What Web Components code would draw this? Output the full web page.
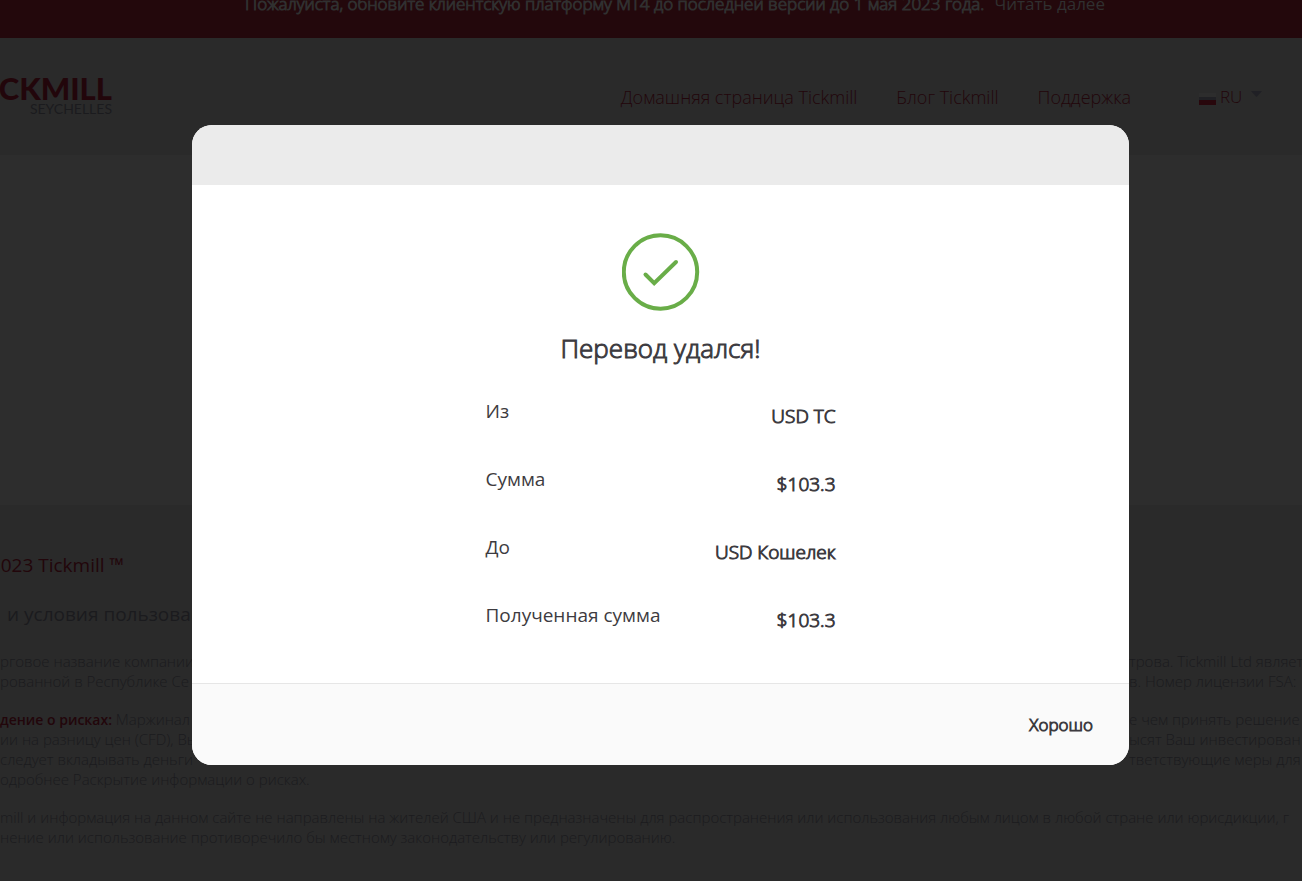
<!DOCTYPE html>
<html lang="ru">
<head>
<meta charset="utf-8">
<meta name="viewport" content="width=device-width, initial-scale=1">
<title>Tickmill</title>
<style>
html, body {
  height: 100%;
  margin: 0;
}
body {
  --columns: 192px minmax(0, 1fr) 173px;
  --accent: #22060b;
  --muted: #1b1b1e;
  display: flex;
  flex-direction: column;
  overflow: hidden;
  background: #2d2d2d;
  color: #3d3b40;
  font-family: "Open Sans", "Noto Sans", sans-serif;
}
</style>
</head>
<body>
<site-banner>
  <strong>Пожалуйста, обновите клиентскую платформу МТ4 до последней версии до 1 мая 2023 года.</strong>
  <a slot="link" href="#more">Читать далее</a>
</site-banner>
<site-header>
  <a href="#home">Домашняя страница Tickmill</a>
  <a href="#blog">Блог Tickmill</a>
  <a href="#support">Поддержка</a>
</site-header>
<site-footer></site-footer>
<result-dialog heading="Перевод удался!">
  <transfer-row label="Из">USD ТС</transfer-row>
  <transfer-row label="Сумма">$103.3</transfer-row>
  <transfer-row label="До">USD Кошелек</transfer-row>
  <transfer-row label="Полученная сумма">$103.3</transfer-row>
  <span slot="action">Хорошо</span>
</result-dialog>

<script>
class SiteBanner extends HTMLElement {
  constructor() {
    super();
    this.attachShadow({ mode: 'open' }).innerHTML = `
<style>
:host {
  display: flex;
  justify-content: center;
  align-items: flex-end;
  gap: 10px;
  box-sizing: border-box;
  height: 38px;
  flex: none;
  padding: 0 0 22px 48px;
  background: #23080c;
  color: #303030;
  font-size: 17px;
  line-height: 24px;
  white-space: nowrap;
}
::slotted(strong) { font-weight: 300; -webkit-text-stroke: 1px; }
::slotted(a) { color: inherit; text-decoration: none; }
</style>
<slot></slot><slot name="link"></slot>`;
  }
}
customElements.define('site-banner', SiteBanner);

class SiteHeader extends HTMLElement {
  constructor() {
    super();
    this.attachShadow({ mode: 'open' }).innerHTML = `
<style>
:host {
  display: flex;
  align-items: center;
  box-sizing: border-box;
  height: 117px;
  flex: none;
  padding-right: 40px;
  background: #2a2a2a;
  color: var(--accent);
  font-size: 18px;
  font-weight: 300;
  line-height: 24px;
}
/* the wordmark runs out of the left edge of the window */
.logo {
  display: flex;
  flex-direction: column;
  align-items: flex-end;
  width: 112px;
  color: inherit;
  font-family: Lato, sans-serif;
  text-decoration: none;
}
.logo b { font-size: 31px; font-weight: 900; line-height: 24px; }
.logo span { color: var(--muted); font-size: 14px; font-weight: 400; line-height: 18px; }
nav {
  display: flex;
  gap: 39px;
  margin-left: auto;
}
::slotted(a) { color: inherit; text-decoration: none; }
.lang {
  display: flex;
  align-items: center;
  gap: 4px;
  margin-left: 68px;
}
.flag { margin-top: 4px; }
.caret { margin-bottom: 6px; margin-left: 4px; }
select {
  appearance: none;
  border: 0;
  padding: 0;
  background: none;
  color: var(--accent);
  font: inherit;
  font-size: 17px;
}
</style>
<a class="logo" href="#top"><b>TICKMILL</b><span>SEYCHELLES</span></a>
<nav><slot></slot></nav>
<label class="lang">
  <svg class="flag" width="17" height="12" viewBox="0 0 17 12" aria-hidden="true">
    <path fill="#2d2d2d" d="M0 0h17v4H0z"/><path fill="#202024" d="M0 4h17v4H0z"/><path fill="#28070c" d="M0 7h17v5H0z"/>
  </svg>
  <select aria-label="Язык"><option>RU</option></select>
  <svg class="caret" width="11" height="6" viewBox="0 0 11 6" aria-hidden="true"><path fill="#202025" d="M0 0h11L5.500 6z"/></svg>
</label>`;
  }
}
customElements.define('site-header', SiteHeader);

// [left of the dialog, right of the dialog]
const notes = [
  [
    ['рговое название компании', 'трова. Tickmill Ltd являет'],
    ['рованной в Республике Се', 'в. Номер лицензии FSA:'],
  ],
  [
    ['<b>дение о рисках:</b> Маржинал', 'е чем принять решение'],
    ['ии на разницу цен (CFD), Вы', 'ысят Ваш инвестирован'],
    ['следует вкладывать деньги', 'тветствующие меры для'],
    ['одробнее Раскрытие информации о рисках.', ''],
  ],
  [
    ['mill и информация на данном сайте не направлены на жителей США и не предназначены для распространения или использования любым лицом в любой стране или юрисдикции, г', ''],
    ['нение или использование противоречило бы местному законодательству или регулированию.', ''],
  ],
];
const note_line = ([left, right]) => `<div class="line"><span>${left}</span>${right ? `<span class="end">${right}</span>` : ''}</div>`;

class SiteFooter extends HTMLElement {
  constructor() {
    super();
    this.attachShadow({ mode: 'open' }).innerHTML = `
<style>
:host {
  display: block;
  flex: 1;
  margin-top: 350px;
  background: #2a2a2a;
  color: var(--muted);
  font-size: 15px;
  font-weight: 300;
  line-height: 20px;
  white-space: nowrap;
}
p { margin: 0; }
.copy, .terms { font-size: 19px; font-weight: 400; line-height: 28px; }
.copy {
  display: flex;
  justify-content: flex-end;
  width: 124px;
  padding-top: 46px;
  color: var(--accent);
}
.terms { padding: 21px 0 0 7px; }
.note { margin-top: 18px; }
.terms + .note { margin-top: 23px; }
.line { display: grid; grid-template-columns: var(--columns); }
.end { grid-column: 3; }
b { color: var(--accent); font-size: 14px; font-weight: 600; line-height: 1; }
</style>
<p class="copy">© 2023 Tickmill ™</p>
<p class="terms">и условия пользован</p>
${notes.map(n => `<div class="note">${n.map(note_line).join('')}</div>`).join('')}`;
  }
}
customElements.define('site-footer', SiteFooter);

class TransferRow extends HTMLElement {
  constructor() {
    super();
    this.attachShadow({ mode: 'open' }).innerHTML = `
<style>
:host {
  display: flex;
  justify-content: space-between;
  font-size: 19px;
  line-height: 28px;
}
.value { padding-top: 5px; font-weight: 300; -webkit-text-stroke: 1px; }
</style>
<span class="label"></span><span class="value"><slot></slot></span>`;
  }

  connectedCallback() {
    this.shadowRoot.querySelector('.label').textContent = this.getAttribute('label');
  }
}
customElements.define('transfer-row', TransferRow);

class ResultDialog extends HTMLElement {
  constructor() {
    super();
    this.attachShadow({ mode: 'open' }).innerHTML = `
<style>
:host {
  position: fixed;
  inset: 0;
  display: grid;
  grid-template-columns: var(--columns);
  align-items: start;
  padding-top: 125px;
}
section {
  grid-column: 2;
  overflow: hidden;
  border-radius: 20px;
  background: #fff;
}
header { height: 60px; background: #ebebeb; }
.body {
  display: flex;
  flex-direction: column;
  align-items: center;
  padding: 48px 24px 49px;
}
h2 {
  margin: 19px 0 31px;
  font-size: 26px;
  font-weight: 300;
  line-height: 36px;
  -webkit-text-stroke: 1px;
}
.rows {
  display: grid;
  gap: 35px;
  width: 350px;
  max-width: 100%;
}
footer {
  display: flex;
  justify-content: flex-end;
  border-top: 1px solid #e6e6e6;
  padding: 27px 36px;
  background: #fafafa;
}
button {
  border: 0;
  padding: 0;
  background: none;
  color: inherit;
  font: inherit;
  font-size: 17px;
  font-weight: 300;
  line-height: 27px;
  -webkit-text-stroke: 1px;
}
</style>
<section role="dialog" aria-labelledby="heading">
  <header></header>
  <div class="body">
    <svg width="78" height="78" viewBox="0 0 78 78" fill="none" stroke="#69ad48" stroke-width="4" aria-hidden="true">
      <circle cx="38.500" cy="39" r="36.700"/>
      <path stroke-linecap="round" d="M23.500 41.500l8.700 8.700L54 29"/>
    </svg>
    <h2 id="heading"></h2>
    <div class="rows"><slot></slot></div>
  </div>
  <footer><button type="button"><slot name="action"></slot></button></footer>
</section>`;
    this.shadowRoot.querySelector('button').addEventListener('click', () => this.remove());
  }

  connectedCallback() {
    this.shadowRoot.querySelector('h2').textContent = this.getAttribute('heading');
  }
}
customElements.define('result-dialog', ResultDialog);
</script>
</body>
</html>
